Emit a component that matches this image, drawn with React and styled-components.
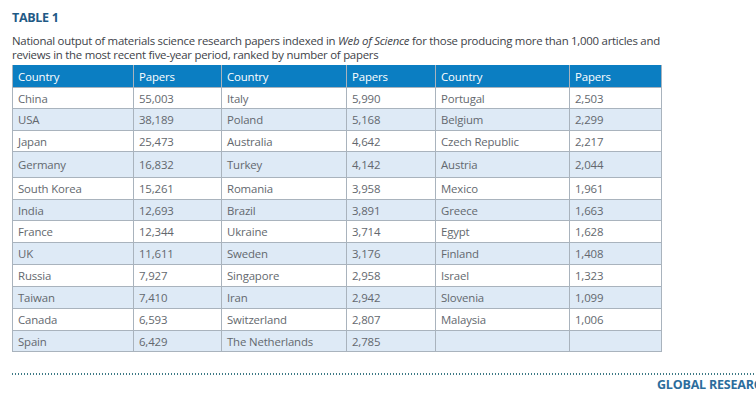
import React from "react";
import styled, { createGlobalStyle } from "styled-components";

const GlobalStyle = createGlobalStyle`
  body {
    margin: 0;
    background: #fff;
    font-family: "Open Sans", "Liberation Sans", sans-serif;
  }
`;

const Page = styled.div`
  width: 756px;
  height: 405px;
  overflow: hidden;
  padding: 11px 0 0 12px;
  box-sizing: border-box;
`;

const Title = styled.div`
  font-size: 12.5px;
  font-weight: 700;
  color: #1f5a86;
  letter-spacing: -0.3px;
  line-height: 14px;
`;

const Caption = styled.p`
  margin: 9px 0 0;
  width: 660px;
  font-size: 11.4px;
  line-height: 14px;
  color: #3d4248;
  letter-spacing: -0.25px;
  em {
    font-style: italic;
  }
`;

const Table = styled.table`
  margin-top: 3px;
  border-collapse: collapse;
  table-layout: fixed;
  width: 649px;
  font-size: 11.4px;
  letter-spacing: -0.15px;
`;

const HeadCell = styled.th`
  background: #0b7ec2;
  color: #fff;
  font-weight: 500;
  text-align: left;
  padding: 0 0 0 5px;
  height: 22px;
  border-left: 1px solid #a9b3bd;
  border-right: 1px solid #a9b3bd;
`;

const Row = styled.tr`
  background: ${(p) => (p.$shaded ? "#deeaf6" : "#fff")};
  height: ${(p) => p.$h}px;
`;

const Cell = styled.td`
  color: #63686e;
  padding: 0 0 0 5px;
  border: 1px solid #a9b3bd;
  white-space: nowrap;
`;

const Rule = styled.div`
  margin: 21px 0 0;
  height: 2px;
  background-image: repeating-linear-gradient(
    to right,
    #3e7a86 0 1px,
    transparent 1px 3px
  );
`;

const Footer = styled.div`
  display: flex;
  justify-content: flex-end;
  margin-top: 1px;
`;

const Running = styled.span`
  font-size: 12.5px;
  font-weight: 700;
  color: #2c6d9c;
  white-space: nowrap;
  width: 99px;
  overflow: hidden;
  letter-spacing: -0.2px;
`;

const widths = [121, 88, 125, 89, 134, 92];

const rows = [
  ["China", "55,003", "Italy", "5,990", "Portugal", "2,503"],
  ["USA", "38,189", "Poland", "5,168", "Belgium", "2,299"],
  ["Japan", "25,473", "Australia", "4,642", "Czech Republic", "2,217"],
  ["Germany", "16,832", "Turkey", "4,142", "Austria", "2,044"],
  ["South Korea", "15,261", "Romania", "3,958", "Mexico", "1,961"],
  ["India", "12,693", "Brazil", "3,891", "Greece", "1,663"],
  ["France", "12,344", "Ukraine", "3,714", "Egypt", "1,628"],
  ["UK", "11,611", "Sweden", "3,176", "Finland", "1,408"],
  ["Russia", "7,927", "Singapore", "2,958", "Israel", "1,323"],
  ["Taiwan", "7,410", "Iran", "2,942", "Slovenia", "1,099"],
  ["Canada", "6,593", "Switzerland", "2,807", "Malaysia", "1,006"],
  ["Spain", "6,429", "The Netherlands", "2,785", "", ""],
];

const heights = [21, 22, 21, 26, 22, 21, 22, 22, 22, 22, 22, 21];

export default function App() {
  return (
    <Page>
      <GlobalStyle />
      <Title>TABLE 1</Title>
      <Caption>
        National output of materials science research papers indexed in{" "}
        <em>Web of Science</em> for those producing more than 1,000 articles
        and reviews in the most recent five-year period, ranked by number of
        papers
      </Caption>
      <Table>
        <colgroup>
          {widths.map((w, i) => (
            <col key={i} style={{ width: w }} />
          ))}
        </colgroup>
        <thead>
          <tr>
            {["Country", "Papers", "Country", "Papers", "Country", "Papers"].map(
              (h, i) => (
                <HeadCell key={i}>{h}</HeadCell>
              )
            )}
          </tr>
        </thead>
        <tbody>
          {rows.map((r, i) => (
            <Row key={i} $shaded={i % 2 === 1} $h={heights[i]}>
              {r.map((c, j) => (
                <Cell key={j}>{c}</Cell>
              ))}
            </Row>
          ))}
        </tbody>
      </Table>
      <Rule />
      <Footer>
        <Running>GLOBAL RESEARCH REPORT</Running>
      </Footer>
    </Page>
  );
}
